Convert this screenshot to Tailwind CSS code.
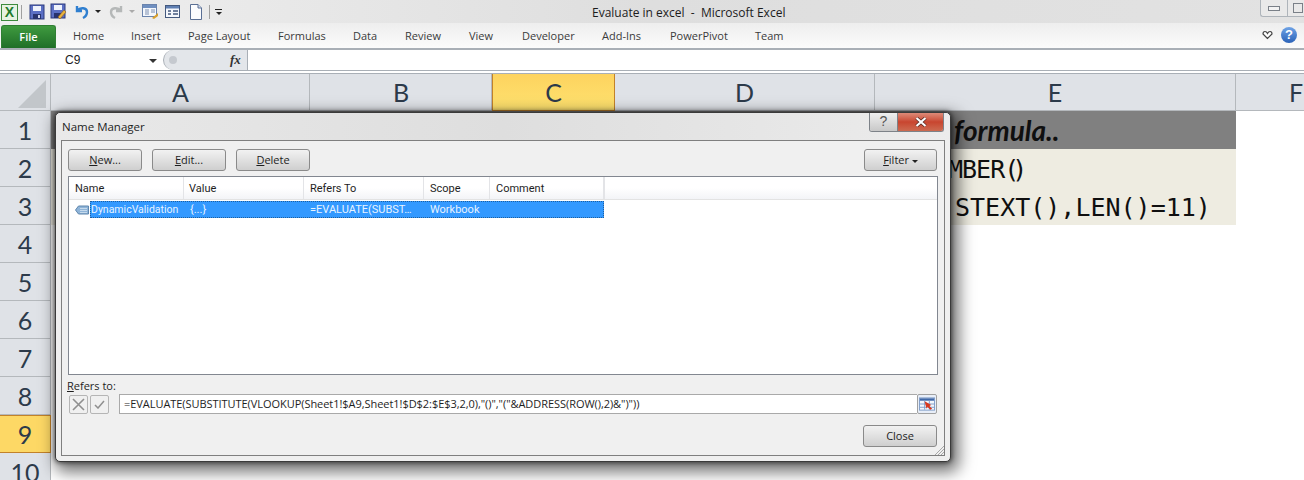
<!DOCTYPE html>
<html lang="en">
<head>
<meta charset="UTF-8">
<title>Evaluate in excel - Microsoft Excel</title>
<script src="https://cdn.jsdelivr.net/npm/@tailwindcss/browser@4"></script>
</head>
<body class="w-[1304px] h-[480px] overflow-hidden bg-white relative font-['Open_Sans','Noto_Sans',sans-serif]">

<!-- title bar + quick access -->
<div class="h-[23px] bg-gradient-to-r from-[#f0f0f0] via-[#dedede] to-[#e2e2e2] flex items-center relative">
  <div class="w-[17px] h-[17px] ml-[1px] mt-[1px] bg-[#e6f2e2] border border-[#3d8a3d] flex items-center justify-center">
    <span class="font-['Liberation_Sans'] font-bold text-[14px] leading-none text-[#1f7a2c]">X</span>
  </div>
  <div class="w-px h-[14px] bg-[#a0a0a0] ml-[3px]"></div>
  <!-- save -->
  <svg class="ml-[7px]" width="16" height="16" viewBox="0 0 16 16"><rect x="1" y="1" width="14" height="14" fill="#5b6fc4" stroke="#2d3a7c"/><rect x="4" y="2" width="8" height="5" fill="#eef2fb"/><rect x="4" y="10" width="8" height="5" fill="#28336e"/><rect x="9" y="11" width="2" height="3" fill="#d0d6f0"/></svg>
  <svg class="ml-[5px]" width="17" height="17" viewBox="0 0 17 17"><rect x="1" y="1" width="14" height="14" fill="#5b6fc4" stroke="#2d3a7c"/><rect x="4" y="2" width="8" height="5" fill="#eef2fb"/><rect x="4" y="10" width="7" height="5" fill="#28336e"/><path d="M8 14 L14 7 L16 9 L10 16 Z" fill="#e8b23c" stroke="#8a5a1e" stroke-width=".6"/></svg>
  <!-- undo -->
  <svg class="ml-[7px]" width="16" height="16" viewBox="0 0 16 16"><path d="M3 2 V7 H8 M3.500 6.500 C6 3 13 3.500 13 8 C13 11 11 13 9 14" fill="none" stroke="#2f7fd0" stroke-width="2.400"/></svg>
  <div class="ml-[5px] w-0 h-0 border-x-[3px] border-x-transparent border-t-[3px] border-t-[#222]"></div>
  <!-- redo -->
  <svg class="ml-[7px]" width="16" height="16" viewBox="0 0 16 16"><path d="M13 2 V7 H8 M12.500 6.500 C10 3 3 3.500 3 8 C3 11 5 13 7 14" fill="none" stroke="#b5b8b8" stroke-width="2.400"/></svg>
  <div class="ml-[5px] w-0 h-0 border-x-[3px] border-x-transparent border-t-[3px] border-t-[#aaa]"></div>
  <!-- form icon -->
  <svg class="ml-[7px]" width="17" height="17" viewBox="0 0 17 17"><rect x=".5" y="1.500" width="14" height="12" fill="#f4f7fc" stroke="#6a83ac"/><rect x="1" y="2" width="13" height="3" fill="#6f8fc0"/><path d="M3 7h4M9 7h4M3 9h4M9 9h4M3 11h4" stroke="#7d8fb0"/><path d="M10 15 L16 10 L16 13 L12 16 Z" fill="#d9a02e"/></svg>
  <svg class="ml-[6px]" width="16" height="16" viewBox="0 0 16 16"><rect x=".5" y="1.500" width="14" height="12" fill="#f4f7fc" stroke="#44597e"/><rect x="1" y="2" width="13" height="2.500" fill="#5f7fb2"/><path d="M3 7h3M3 10h3M8 7h5M8 10h5" stroke="#44597e" stroke-width="1.400"/></svg>
  <svg class="ml-[9px]" width="12" height="16" viewBox="0 0 12 16"><path d="M.5 .5 H8 L11.500 4 V15.500 H.5 Z" fill="#fbfcfe" stroke="#5a6f94"/><path d="M8 .5 V4 H11.500" fill="#cfdbee" stroke="#5a6f94"/></svg>
  <div class="w-px h-[14px] bg-[#a0a0a0] ml-[7px]"></div>
  <div class="ml-[5px] flex flex-col items-center gap-[2px]">
    <div class="w-[7px] h-px bg-[#222]"></div>
    <div class="w-0 h-0 border-x-[3px] border-x-transparent border-t-[3px] border-t-[#222]"></div>
  </div>
  <div class="absolute left-[592px] top-[4px] text-[12px] leading-[17px] text-[#1c1c1c] whitespace-pre">Evaluate in excel  -  Microsoft Excel</div>
  <!-- window buttons, cut by the right edge -->
  <div class="absolute left-[1260px] top-0 w-[44px] h-[17px] flex border border-t-0 border-r-0 border-[#aeb4ba] rounded-bl-[3px] bg-[#e9e9e9]">
    <div class="w-[27px] border-r border-[#aeb4ba] flex items-center justify-center"><div class="w-[12px] h-[5px] border border-[#7a8088] bg-[#f3f3f3]"></div></div>
    <div class="flex-1 flex items-center pl-[5px]"><div class="w-[10px] h-[10px] border border-[#7a8088]"></div></div>
  </div>
</div>

<!-- ribbon tabs -->
<div class="h-[27px] bg-gradient-to-b from-[#eeeeee] to-[#fbfbfb] border-b-2 border-[#a9afb6] flex items-end relative text-[11px] text-[#3b3b3b]">
  <div class="ml-px w-[55px] h-[23px] rounded-t-[3px] bg-gradient-to-b from-[#3f9a3f] to-[#1f6f28] border border-[#2f7f33] border-b-0 text-white font-semibold flex items-center justify-center text-[11px]">File</div>
  <div class="absolute inset-x-0 top-[2px] bottom-0 flex items-center">
    <span class="absolute left-[73px]">Home</span>
    <span class="absolute left-[131px]">Insert</span>
    <span class="absolute left-[188px]">Page Layout</span>
    <span class="absolute left-[278px]">Formulas</span>
    <span class="absolute left-[353px]">Data</span>
    <span class="absolute left-[405px]">Review</span>
    <span class="absolute left-[469px]">View</span>
    <span class="absolute left-[522px]">Developer</span>
    <span class="absolute left-[602px]">Add-Ins</span>
    <span class="absolute left-[670px]">PowerPivot</span>
    <span class="absolute left-[755px]">Team</span>
  </div>
  <svg class="absolute left-[1262px] top-[7px]" width="11" height="10" viewBox="0 0 11 10"><path d="M5.500 8.500 L1 4 Q1 1.500 3 1.500 Q4.500 1.500 5.500 3.500 Q6.500 1.500 8 1.500 Q10 1.500 10 4 Z" fill="#fff" stroke="#444" stroke-width="1.200"/></svg>
  <div class="absolute left-[1281px] top-[4px] w-[16px] h-[16px] rounded-full bg-gradient-to-b from-[#6fa3e6] to-[#2a62b8] text-white font-['Liberation_Sans'] font-bold text-[13px] leading-[16px] text-center">?</div>
</div>

<!-- formula bar -->
<div class="h-[21px] flex bg-white border-b border-[#a9afb6]">
  <div class="w-[163px] relative text-[12px] leading-[21px] text-[#222] pl-[65px] font-['Liberation_Sans']">C9
    <div class="absolute left-[149px] top-[9px] w-0 h-0 border-x-[4px] border-x-transparent border-t-[4px] border-t-[#333]"></div>
  </div>
  <div class="w-[85px] bg-[#e3e6ea] border-r border-[#a9afb6] rounded-l-[12px] border-l border-l-[#a9afb6] relative">
    <div class="absolute left-[5px] top-[6px] w-[8px] h-[8px] rounded-full bg-[#c5c9cf]"></div>
    <span class="absolute left-[66px] top-0 leading-[20px] font-['Liberation_Serif'] italic font-bold text-[13px] text-[#333]">fx</span>
  </div>
  <div class="flex-1"></div>
</div>
<div class="h-[3px] bg-white border-b border-[#a9afb6]"></div>

<!-- sheet -->
<div class="grid grid-cols-[51px_259px_182px_123px_260px_361px_68px] grid-rows-[37px_38px_38px_38px_38px_38px_38px_38px_38px_38px_38px] font-['Lato'] text-[25px] text-[#2c3a4a]">
  <div class="bg-[#dfe2e7] border-r border-b border-[#b4b8bc] relative overflow-hidden">
    <div class="absolute left-[18px] top-[6px] w-[28px] h-[28px] bg-[#c2c6ca] [clip-path:polygon(100%_0,100%_100%,0_100%)]"></div>
  </div>
  <div class="bg-[#dfe2e7] border-r border-b border-[#b4b8bc] flex items-center justify-center pt-[2px] pl-[1px]">A</div>
  <div class="bg-[#dfe2e7] border-r border-b border-[#b4b8bc] flex items-center justify-center pt-[2px] pl-[1px]">B</div>
  <div class="bg-gradient-to-b from-[#fdd35f] to-[#fee26f] border-x border-b border-[#c2822a] flex items-center justify-center pt-[2px]">C</div>
  <div class="bg-[#dfe2e7] border-r border-b border-[#b4b8bc] flex items-center justify-center pt-[2px]">D</div>
  <div class="bg-[#dfe2e7] border-r border-b border-[#b4b8bc] flex items-center justify-center pt-[2px]">E</div>
  <div class="bg-[#dfe2e7] border-b border-[#b4b8bc] pl-[53px] flex items-center pt-[2px]">F</div>

  <!-- row 1 -->
  <div class="bg-[#dfe2e7] border-r border-b border-[#b4b8bc] flex items-center justify-center pt-[2px]">1</div>
  <div class="col-span-4 bg-[#808080]"></div>
  <div class="bg-[#808080] flex items-center pl-[79px] font-bold italic text-[28px] text-[#0f0f0f]">formula..</div>
  <div></div>

  <!-- row 2 -->
  <div class="bg-[#dfe2e7] border-r border-b border-[#b4b8bc] flex items-center justify-center pt-[2px]">2</div>
  <div class="col-span-4 bg-[#eeece1]"></div>
  <div class="bg-[#eeece1] flex items-center pl-[73px] pt-[3px] font-['DejaVu_Sans_Mono'] text-[25px] tracking-[-1px] text-[#0f0f0f]">MBER<span class="tracking-[-7px]">()</span></div>
  <div></div>

  <!-- row 3 -->
  <div class="bg-[#dfe2e7] border-r border-b border-[#b4b8bc] flex items-center justify-center pt-[2px]">3</div>
  <div class="col-span-4 bg-[#eeece1]"></div>
  <div class="bg-[#eeece1] flex items-center pl-[80px] pt-[3px] font-['DejaVu_Sans_Mono'] text-[25px] text-[#0f0f0f] whitespace-nowrap">STEXT(),LEN()=11)</div>
  <div></div>

  <div class="bg-[#dfe2e7] border-r border-b border-[#b4b8bc] flex items-center justify-center pt-[2px]">4</div><div class="col-span-6"></div>
  <div class="bg-[#dfe2e7] border-r border-b border-[#b4b8bc] flex items-center justify-center pt-[2px]">5</div><div class="col-span-6"></div>
  <div class="bg-[#dfe2e7] border-r border-b border-[#b4b8bc] flex items-center justify-center pt-[2px]">6</div><div class="col-span-6"></div>
  <div class="bg-[#dfe2e7] border-r border-b border-[#b4b8bc] flex items-center justify-center pt-[2px]">7</div><div class="col-span-6"></div>
  <div class="bg-[#dfe2e7] border-r border-b border-[#b4b8bc] flex items-center justify-center pt-[2px]">8</div><div class="col-span-6"></div>
  <div class="bg-[#fdd865] border-y border-r border-[#c2822a] flex items-center justify-center pt-[1px]">9</div><div class="col-span-6"></div>
  <div class="bg-[#dfe2e7] border-r border-[#b4b8bc] flex items-center justify-center pt-[2px]">10</div><div class="col-span-6"></div>
</div>

<!-- Name Manager dialog -->
<div class="absolute left-[55px] top-[112px] w-[896px] h-[350px] bg-[#efefef] rounded-[5px] border border-[#3a3a3a] shadow-[0_0_4px_1px_rgba(0,0,0,.5),4px_6px_16px_4px_rgba(0,0,0,.55)] text-[11px] text-[#1e1e1e] font-['Open_Sans']">
  <div class="h-[27px] bg-gradient-to-r from-[#e9e9e9] via-[#dedede] to-[#ececec] rounded-t-[5px] pl-[6px] pt-[6px] text-[11.500px] leading-[16px]">Name Manager</div>
  <div class="absolute left-[813px] top-0 w-[75px] h-[19px] flex border border-t-0 border-[#7d8288] rounded-b-[3px] overflow-hidden">
    <div class="w-[28px] bg-gradient-to-b from-[#efefef] to-[#c8c8c8] border-r border-[#7d8288] text-center text-[14px] leading-[17px] font-['Liberation_Sans'] text-[#555]">?</div>
    <div class="flex-1 bg-gradient-to-b from-[#dd8a78] via-[#c8452f] to-[#cc6a50] flex items-center justify-center">
      <svg width="12" height="10" viewBox="0 0 12 10"><path d="M1.500 1 L10.500 9 M10.500 1 L1.500 9" stroke="#5a2a22" stroke-width="3.600"/><path d="M1.500 1 L10.500 9 M10.500 1 L1.500 9" stroke="#fff" stroke-width="2.200"/></svg>
    </div>
  </div>
  <!-- inner frame -->
  <div class="mx-[5px] h-[316px] border border-[#7f7f7f] bg-[#f0f0f0] px-[6px] pt-[8px] relative">
    <div class="flex h-[22px]">
      <button class="w-[74px] h-[22px] rounded-[3px] border border-[#8a8a8a] bg-gradient-to-b from-[#f2f2f2] to-[#cfcfcf] leading-[20px]"><u>N</u>ew...</button>
      <button class="ml-[10px] w-[74px] h-[22px] rounded-[3px] border border-[#8a8a8a] bg-gradient-to-b from-[#f2f2f2] to-[#cfcfcf] leading-[20px]"><u>E</u>dit...</button>
      <button class="ml-[10px] w-[74px] h-[22px] rounded-[3px] border border-[#8a8a8a] bg-gradient-to-b from-[#f2f2f2] to-[#cfcfcf] leading-[20px]"><u>D</u>elete</button>
      <button class="ml-auto mr-px w-[73px] h-[22px] rounded-[3px] border border-[#8a8a8a] bg-gradient-to-b from-[#f2f2f2] to-[#cfcfcf] leading-[20px]"><u>F</u>ilter <span class="inline-block align-middle w-0 h-0 border-x-[3px] border-x-transparent border-t-[3px] border-t-[#222]"></span></button>
    </div>
    <!-- list -->
    <div class="mt-[5px] w-[870px] h-[199px] bg-white border border-[#828790] font-['Roboto']">
      <div class="h-[23px] flex border-b border-[#e3e3e3] bg-gradient-to-b from-white from-50% to-[#f3f4f7]">
        <div class="w-[115px] pl-[6px] leading-[23px] border-r border-[#e3e4e7]">Name</div>
        <div class="w-[120px] pl-[5px] leading-[23px] border-r border-[#e3e4e7]">Value</div>
        <div class="w-[120px] pl-[6px] leading-[23px] border-r border-[#e3e4e7]">Refers To</div>
        <div class="w-[66px] pl-[6px] leading-[23px] border-r border-[#e3e4e7]">Scope</div>
        <div class="w-[115px] pl-[6px] leading-[23px] border-r-2 border-[#e3e4e7]">Comment</div>
      </div>
      <div class="mt-[1px] h-[17px] flex items-center relative">
        <svg class="ml-[6px]" width="14" height="10" viewBox="0 0 14 10"><path d="M.5 5 L3.500 1 H13.500 V9 H3.500 Z" fill="#8fb4d8" stroke="#5f86ad"/><path d="M5 3.500h7M5 5.500h7M5 7.500h7" stroke="#d3e3f2" stroke-width=".8"/></svg>
        <div class="absolute left-[21px] top-0 w-[514px] h-[17px] bg-[#3399ff] border border-dotted border-[#1f5f9f] text-[#e8f3ff] leading-[15px] flex">
          <span class="w-[99px] whitespace-nowrap text-[10.500px]">DynamicValidation</span>
          <span class="w-[120px]">{...}</span>
          <span class="w-[120px] whitespace-nowrap">=EVALUATE(SUBST…</span>
          <span>Workbook</span>
        </div>
      </div>
    </div>
    <!-- refers to -->
    <div class="mt-[3px] h-[15px] leading-[15px] -ml-px"><u>R</u>efers to:</div>
    <div class="flex items-center h-[20px] mt-[1px]">
      <div class="w-[19px] h-[19px] ml-[1px] rounded-[2px] border border-[#b5b5b5] flex items-center justify-center">
        <svg width="13" height="13" viewBox="0 0 13 13"><path d="M1 1 L12 12 M12 1 L1 12" stroke="#8f8f8f" stroke-width="1.600"/></svg>
      </div>
      <div class="w-[19px] h-[19px] ml-[2px] rounded-[2px] border border-[#b5b5b5] flex items-center justify-center">
        <svg width="11" height="9" viewBox="0 0 11 9"><path d="M1 5 L4 8 L10 1" fill="none" stroke="#8f8f8f" stroke-width="1.500"/></svg>
      </div>
      <div class="ml-[10px] w-[798px] h-[20px] bg-white border-y border-l border-[#a9a9a9] pl-[4px] leading-[18px] whitespace-nowrap tracking-[-0.05px]">=EVALUATE(SUBSTITUTE(VLOOKUP(Sheet1!$A9,Sheet1!$D$2:$E$3,2,0),"()","("&amp;ADDRESS(ROW(),2)&amp;")"))</div>
      <div class="w-[20px] h-[20px] bg-[#e8eef8] border border-[#a0a0a0] rounded-[2px] flex items-center justify-center">
        <svg width="16" height="14" viewBox="0 0 17 14"><rect x=".5" y=".5" width="16" height="13" fill="#f4f7fc" stroke="#7f9cc8"/><rect x="1" y="1" width="15" height="2.500" fill="#3f68a8"/><path d="M1 7h15M1 10.500h15M6 3v10M11 3v10" stroke="#7f9cc8"/><path d="M6 4 L13 8 L11 9 L14 12 L12 13 L9 10 L8 12 Z" fill="#d8371d"/></svg>
      </div>
    </div>
    <div class="flex justify-end mt-[11px] mr-px">
      <button class="w-[74px] h-[22px] rounded-[3px] border border-[#8a8a8a] bg-gradient-to-b from-[#f2f2f2] to-[#cfcfcf] leading-[20px]">Close</button>
    </div>
    <svg class="absolute right-0 bottom-0" width="10" height="10" viewBox="0 0 10 10"><path d="M10 1 L1 10 M10 4 L4 10 M10 7 L7 10" stroke="#a8a8a8"/></svg>
  </div>
</div>
</body>
</html>
